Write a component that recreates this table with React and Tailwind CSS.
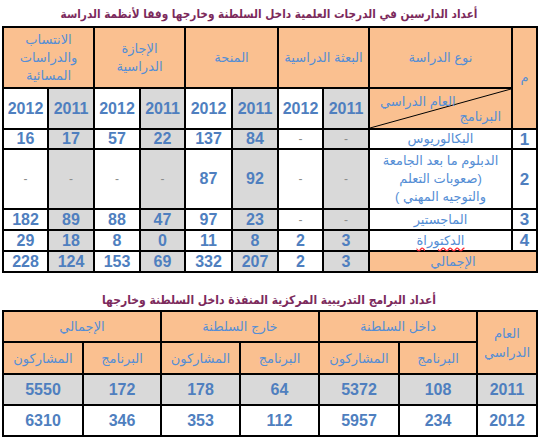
import React from 'react';

const font = { fontFamily: '"Liberation Sans", "DejaVu Sans", Arial, sans-serif' };
const titleFont = { fontFamily: '"DejaVu Sans Condensed", "DejaVu Sans", sans-serif' };

const bd = 'border-2 border-black p-0';
const peach = 'bg-[#fac090]';
const grey = 'bg-[#d9d9d9]';
const hText = 'text-[#558ed5] font-normal';
const num = 'text-[#4f7fbf] font-bold text-[16px] leading-none text-center';

const studies = [
  { n: '1', name: ['البكالوريوس'], v: ['-', '-', '84', '137', '22', '57', '17', '16'], h: 'h-[20px]' },
  {
    n: '2',
    name: ['الدبلوم ما بعد الجامعة', '(صعوبات التعلم', 'والتوجيه المهني )'],
    v: ['-', '-', '92', '87', '-', '-', '-', '-'],
    h: 'h-[60px]',
  },
  { n: '3', name: ['الماجستير'], v: ['-', '-', '23', '97', '47', '88', '89', '182'], h: 'h-[21px]' },
  { n: '4', name: ['الدكتوراة'], v: ['3', '2', '8', '11', '0', '8', '18', '29'], h: 'h-[21px]', wavy: true },
];

const totals = ['3', '2', '207', '332', '69', '153', '124', '228'];

const programs = [
  { year: '2011', v: ['108', '5372', '64', '178', '172', '5550'], bg: grey },
  { year: '2012', v: ['234', '5957', '112', '353', '346', '6310'], bg: 'bg-white' },
];

const Cell = ({ value, i }) => (
  <td
    className={`${bd} ${i % 2 === 0 ? grey : 'bg-white'} ${
      value === '-' ? 'text-[#8c8c8c] text-[12px] leading-none text-center' : num
    }`}
  >
    {value}
  </td>
);

export default function App() {
  return (
    <div className="w-[538px] h-[437px] bg-white overflow-hidden px-[2px]" style={font}>
      <div className="h-[26px] flex items-center justify-center pt-[4px]">
        <h1 dir="rtl" className="text-[11.7px] font-bold text-[#7c2a5c] leading-none" style={titleFont}>
          أعداد الدارسين في الدرجات العلمية داخل السلطنة وخارجها وفقا لأنظمة الدراسة
        </h1>
      </div>

      <table dir="rtl" className="table-fixed border-collapse w-[534px]">
        <colgroup>
          <col className="w-[25px]" />
          <col className="w-[143px]" />
          <col className="w-[46px]" />
          <col className="w-[45px]" />
          <col className="w-[46px]" />
          <col className="w-[47px]" />
          <col className="w-[45px]" />
          <col className="w-[46px]" />
          <col className="w-[46px]" />
          <col className="w-[45px]" />
        </colgroup>
        <thead className="text-[13px] leading-[18px]">
          <tr className="h-[61px]">
            <th rowSpan={2} className={`${bd} ${peach} ${hText}`}>م</th>
            <th className={`${bd} ${peach} ${hText}`}>نوع الدراسة</th>
            <th colSpan={2} className={`${bd} ${peach} ${hText}`}>البعثة الدراسية</th>
            <th colSpan={2} className={`${bd} ${peach} ${hText}`}>المنحة</th>
            <th colSpan={2} className={`${bd} ${peach} ${hText}`}>الإجازة<br />الدراسية</th>
            <th colSpan={2} className={`${bd} ${peach} ${hText}`}>الانتساب<br />والدراسات<br />المسائية</th>
          </tr>
          <tr className="h-[41px]">
            <th className={`${bd} ${peach} ${hText} relative`}>
              <svg className="absolute inset-0 w-full h-full" preserveAspectRatio="none" viewBox="0 0 100 100">
                <line x1="0" y1="100" x2="100" y2="0" stroke="black" strokeWidth="1" vectorEffect="non-scaling-stroke" />
              </svg>
              <span className="absolute top-[4px] left-[10px]">العام الدراسي</span>
              <span className="absolute bottom-[2px] right-[10px]">البرنامج</span>
            </th>
            {['2011', '2012', '2011', '2012', '2011', '2012', '2011', '2012'].map((y, i) => (
              <th key={i} className={`${bd} ${i % 2 === 0 ? grey : 'bg-white'} ${num}`}>{y}</th>
            ))}
          </tr>
        </thead>
        <tbody>
          {studies.map((r) => (
            <tr key={r.n} className={r.h}>
              <td className={`${bd} bg-white ${num} text-[17px]`}>{r.n}</td>
              <td className={`${bd} bg-white text-[#558ed5] text-[13px] leading-[18px] text-center`}>
                {r.name.map((l, i) => (
                  <div key={i} dir="rtl">
                    {r.wavy ? (
                      <span className="underline decoration-wavy decoration-red-500 underline-offset-2">{l}</span>
                    ) : (
                      l
                    )}
                  </div>
                ))}
              </td>
              {r.v.map((v, i) => (
                <Cell key={i} value={v} i={i} />
              ))}
            </tr>
          ))}
          <tr className="h-[21px]">
            <td colSpan={2} className={`${bd} ${peach} text-[#558ed5] text-[13px] leading-none text-center`}>
              الإجمالي
            </td>
            {totals.map((v, i) => (
              <Cell key={i} value={v} i={i} />
            ))}
          </tr>
        </tbody>
      </table>

      <div className="h-[37px] flex items-end justify-center pb-[4px]">
        <h2 dir="rtl" className="text-[12px] font-bold text-[#7c2a5c] leading-none" style={titleFont}>
          أعداد البرامج التدريبية المركزية المنفذة داخل السلطنة وخارجها
        </h2>
      </div>

      <table dir="rtl" className="table-fixed border-collapse w-[534px]">
        <colgroup>
          <col className="w-[60px]" />
          <col className="w-[78px]" />
          <col className="w-[80px]" />
          <col className="w-[79px]" />
          <col className="w-[79px]" />
          <col className="w-[78px]" />
          <col className="w-[80px]" />
        </colgroup>
        <thead className="text-[13px] leading-[19px]">
          <tr className="h-[31px]">
            <th rowSpan={2} className={`${bd} ${peach} ${hText}`}>العام<br />الدراسي</th>
            <th colSpan={2} className={`${bd} ${peach} ${hText}`}>داخل السلطنة</th>
            <th colSpan={2} className={`${bd} ${peach} ${hText}`}>خارج السلطنة</th>
            <th colSpan={2} className={`${bd} ${peach} ${hText}`}>الإجمالي</th>
          </tr>
          <tr className="h-[32px]">
            {['البرنامج', 'المشاركون', 'البرنامج', 'المشاركون', 'البرنامج', 'المشاركون'].map((t, i) => (
              <th key={i} className={`${bd} ${peach} ${hText}`}>{t}</th>
            ))}
          </tr>
        </thead>
        <tbody>
          {programs.map((r) => (
            <tr key={r.year} className="h-[31px]">
              <td className={`${bd} ${r.bg} ${num}`}>{r.year}</td>
              {r.v.map((v, i) => (
                <td key={i} className={`${bd} ${r.bg} ${num}`}>{v}</td>
              ))}
            </tr>
          ))}
        </tbody>
      </table>
    </div>
  );
}
